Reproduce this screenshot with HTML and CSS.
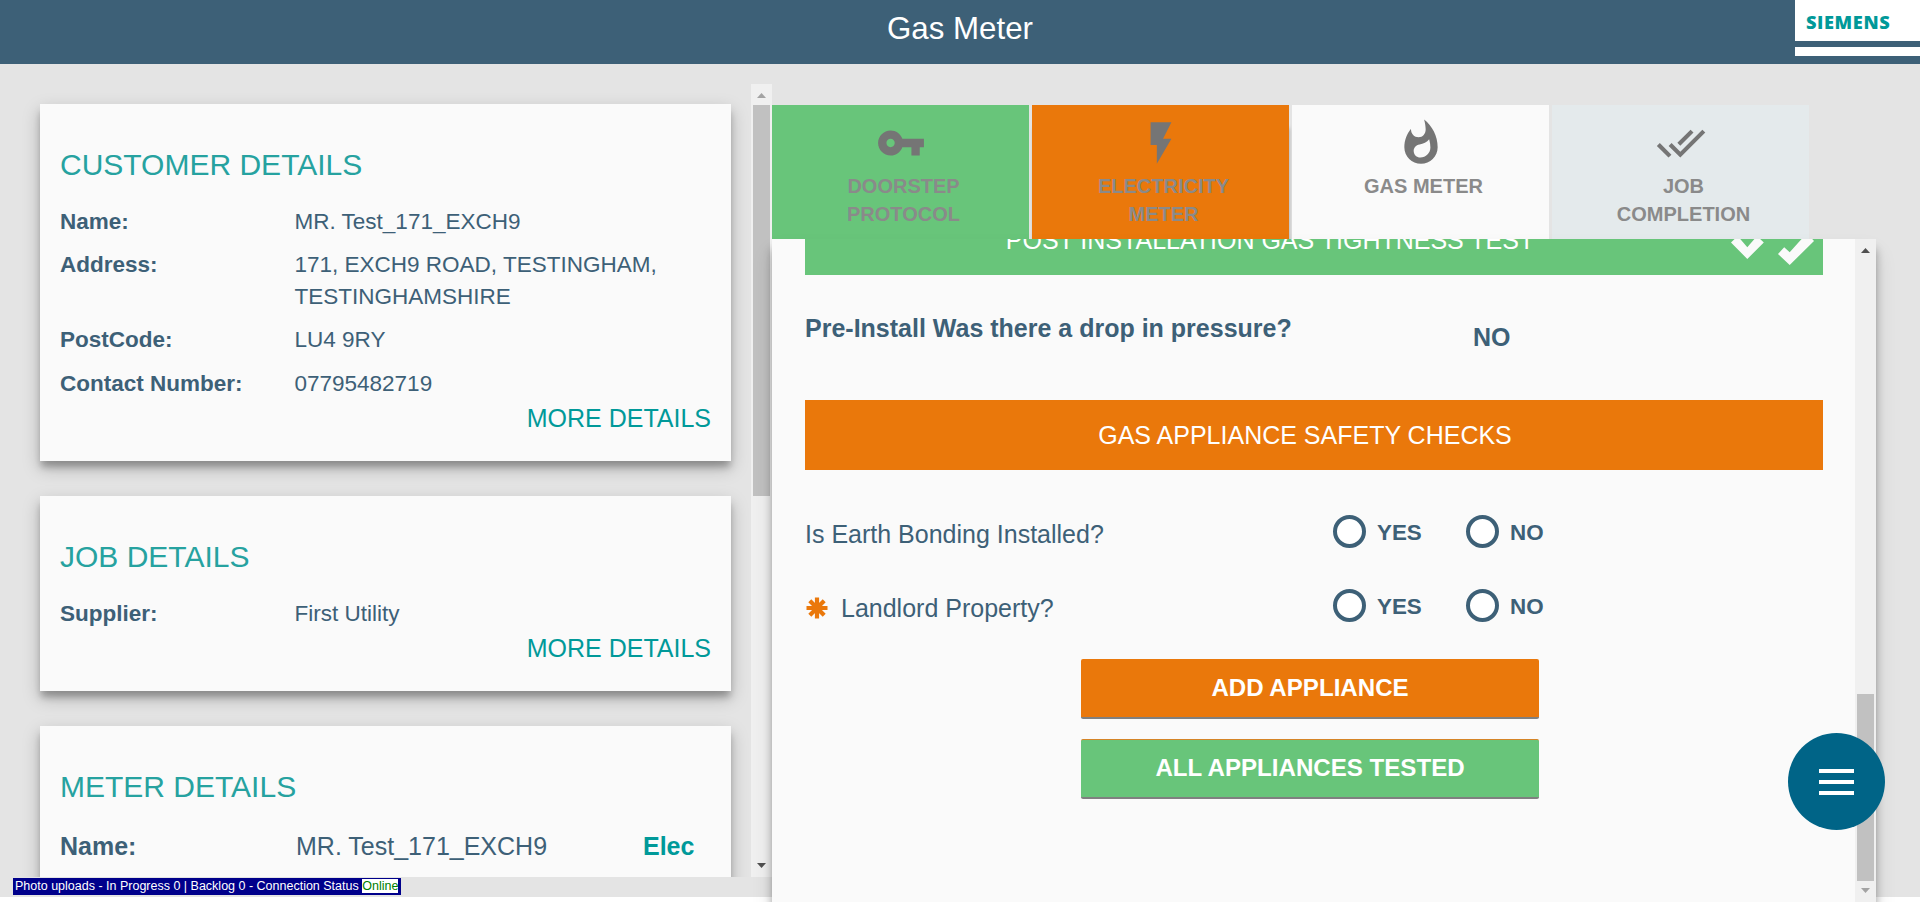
FILE: index.html
```html
<!DOCTYPE html>
<html lang="en">
<head>
<meta charset="utf-8">
<title>Gas Meter</title>
<link rel="stylesheet" href="styles.css">
</head>
<body>
<header class="topbar">
  <h1 class="topbar-title">Gas Meter</h1>
  <div class="logo"><span class="logo-name">SIEMENS</span><span class="logo-rule"></span></div>
</header>
<main class="workspace">
  <aside class="sidebar">
    <div class="sidebar-cards">
      <section class="card">
        <h2 class="card-title">CUSTOMER DETAILS</h2>
        <dl class="details">
          <dt>Name:</dt><dd>MR. Test_171_EXCH9</dd>
          <dt>Address:</dt><dd>171, EXCH9 ROAD, TESTINGHAM, TESTINGHAMSHIRE</dd>
          <dt>PostCode:</dt><dd>LU4 9RY</dd>
          <dt>Contact Number:</dt><dd>07795482719</dd>
        </dl>
        <a class="more">MORE DETAILS</a>
      </section>
      <section class="card">
        <h2 class="card-title">JOB DETAILS</h2>
        <dl class="details">
          <dt>Supplier:</dt><dd>First Utility</dd>
        </dl>
        <a class="more">MORE DETAILS</a>
      </section>
      <section class="card">
        <h2 class="card-title">METER DETAILS</h2>
        <div class="meter-row"><b>Name:</b><span>MR. Test_171_EXCH9</span><b class="fuel">Elec</b></div>
      </section>
    </div>
    <div class="scrollbar">
      <svg class="arrow arrow-off" viewBox="0 0 9 5"><path d="M0 5h9L4.500 0z"/></svg>
      <div class="thumb thumb-left"></div>
      <svg class="arrow arrow-end" viewBox="0 0 9 5"><path d="M0 0h9L4.500 5z"/></svg>
    </div>
  </aside>
  <section class="job">
    <nav class="tabs">
      <div class="tab tab-done">
        <svg class="tab-icon" viewBox="0 0 24 24"><path d="M12.650 10C11.830 7.670 9.610 6 7 6c-3.310 0-6 2.690-6 6s2.690 6 6 6c2.610 0 4.830-1.670 5.650-4H17v4h4v-4h2v-4H12.650zM7 14c-1.100 0-2-.9-2-2s.9-2 2-2 2 .9 2 2-.9 2-2 2z"/></svg>
        <span>DOORSTEP<br>PROTOCOL</span>
      </div>
      <div class="tab tab-active">
        <svg class="tab-icon" viewBox="0 0 24 24"><path d="M7 2v11h3v9l7-12h-4l4-8z"/></svg>
        <span>ELECTRICITY<br>METER</span>
      </div>
      <div class="tab tab-open">
        <svg class="tab-icon" viewBox="0 0 24 24"><path d="M13.500.670s.740 2.650.740 4.800c0 2.060-1.350 3.730-3.410 3.730-2.070 0-3.630-1.670-3.630-3.730l.030-.360C5.210 7.510 4 10.620 4 14c0 4.420 3.580 8 8 8s8-3.580 8-8C20 8.610 17.410 3.800 13.500.670zM11.710 19c-1.780 0-3.220-1.400-3.220-3.140 0-1.620 1.050-2.760 2.810-3.120 1.770-.360 3.600-1.210 4.620-2.580.390 1.290.590 2.650.590 4.040 0 2.650-2.150 4.800-4.800 4.800z"/></svg>
        <span>GAS METER</span>
      </div>
      <div class="tab tab-idle">
        <svg class="tab-icon" viewBox="0 0 24 24"><path d="M18 7l-1.410-1.410-6.340 6.340 1.410 1.410L18 7zm4.240-1.410L11.660 16.170 7.480 12l-1.410 1.410L11.660 19l12-12-1.420-1.410zM.410 13.410L6 19l1.410-1.410L1.830 12 .410 13.410z"/></svg>
        <span>JOB<br>COMPLETION</span>
      </div>
    </nav>
    <div class="panel">
      <div class="form">
        <div class="banner banner-done">
          <span>POST INSTALLATION GAS TIGHTNESS TEST</span>
          <svg class="banner-icons" viewBox="0 0 84 34"><path d="M0 10.500L16.300 27 32.800 10.500 26 4l-9.700 11.300L6.700 4zM47 22l6.200-6.800 5.500 5L76 1l7 8L58.700 33z"/></svg>
        </div>
        <div class="answer"><b>Pre-Install Was there a drop in pressure?</b><b class="answer-value">NO</b></div>
        <div class="banner banner-open"><span>GAS APPLIANCE SAFETY CHECKS</span></div>
        <div class="question">
          <span class="question-text">Is Earth Bonding Installed?</span>
          <label class="choice"><i class="radio"></i>YES</label>
          <label class="choice"><i class="radio"></i>NO</label>
        </div>
        <div class="question">
          <span class="question-text"><svg class="required" viewBox="-11 -11 22 22"><path d="M0-10.500v21M-10.500 0h21M-7.200-7.200L7.200 7.200M7.200-7.200L-7.200 7.200"/></svg>Landlord Property?</span>
          <label class="choice"><i class="radio"></i>YES</label>
          <label class="choice"><i class="radio"></i>NO</label>
        </div>
        <div class="actions">
          <button class="btn btn-add">ADD APPLIANCE</button>
          <button class="btn btn-tested">ALL APPLIANCES TESTED</button>
        </div>
      </div>
      <div class="scrollbar">
        <svg class="arrow" viewBox="0 0 9 5"><path d="M0 5h9L4.500 0z"/></svg>
        <div class="thumb thumb-right"></div>
        <svg class="arrow arrow-off arrow-last" viewBox="0 0 9 5"><path d="M0 0h9L4.500 5z"/></svg>
      </div>
    </div>
  </section>
</main>
<div class="status">Photo uploads - In Progress 0 | Backlog 0 - Connection Status <span class="status-online">Online</span></div>
<button class="fab"><i></i><i></i><i></i></button>
</body>
</html>
```
FILE: styles.css
```css
* { box-sizing: border-box; }
body {
  margin: 0;
  height: 902px;
  overflow: hidden;
  background: #fff;
  color: #3d6077;
  font-family: "Liberation Sans", Arial, sans-serif;
}
h1, h2, dl, dd { margin: 0; font-weight: normal; }

.topbar {
  display: grid;
  grid-template-columns: 125px 1fr 125px;
  height: 64px;
  background: #3d6077;
}
.topbar-title {
  grid-column: 2;
  padding-top: 9px;
  color: #fff;
  font-size: 31.25px;
  line-height: 40px;
  text-align: center;
}
.logo {
  display: flex;
  flex-direction: column;
  height: 56px;
  background: #fff;
}
.logo-name {
  height: 41px;
  padding-left: 11px;
  color: #099;
  font: 800 18.2px/44px "Open Sans", sans-serif;
  letter-spacing: .6px;
}
.logo-rule { height: 6px; background: #3d6077; }

.workspace {
  display: flex;
  height: 833px;
  background: #e4e4e4;
}
.sidebar {
  display: flex;
  width: 772px;
  height: 793px;
  margin-top: 20px;
}
.sidebar-cards {
  display: flex;
  flex-direction: column;
  gap: 35px;
  width: 751px;
  padding: 20px 20px 0 40px;
  overflow: hidden;
}
.card {
  flex: none;
  min-height: 195px;
  padding: 41px 20px 26.5px;
  background: #fafafa;
  box-shadow: 0 7px 7px -1px rgba(0, 0, 0, .26), 0 7px 17px rgba(0, 0, 0, .22);
}
.card-title {
  color: #26a2a0;
  font-size: 30px;
  line-height: 40px;
}
.details {
  display: grid;
  grid-template-columns: 234.5px 1fr;
  row-gap: 11.2px;
  margin-top: 21px;
  font-size: 22.5px;
  line-height: 32px;
}
.details dt { font-weight: bold; }
.more {
  display: block;
  margin-top: 2.5px;
  color: #099;
  font-size: 25px;
  line-height: 32px;
  text-align: right;
}
.meter-row {
  display: grid;
  grid-template-columns: 236px 347px 1fr;
  margin-top: 23px;
  font-size: 25px;
  line-height: 32px;
}
.fuel { color: #099; }

.scrollbar {
  display: flex;
  flex-direction: column;
  align-items: center;
  width: 21px;
  background: #f0f0f0;
}
.arrow {
  flex: none;
  width: 9px;
  height: 5px;
  margin: 9px 0 7px;
  fill: #505050;
}
.arrow-off { fill: #a3a3a3; }
.arrow-end { margin-top: auto; margin-bottom: 9px; }
.arrow-last { margin-bottom: 9px; margin-top: 7px; }
.thumb { width: 17px; background: #c1c1c1; }
.thumb-left { height: 391px; }
.thumb-right { height: 187px; margin-top: auto; }

.job {
  width: 1104px;
  height: 838px;
  padding-top: 41px;
}
.tabs { display: flex; gap: 3px; height: 134px; }
.tab {
  display: flex;
  flex-direction: column;
  align-items: center;
  width: 257px;
  padding-top: 13px;
  color: #8a8a8a;
  font-size: 20px;
  font-weight: bold;
  line-height: 28px;
  text-align: center;
}
.tab span { margin-top: 4px; padding-left: 6px; }
.tab-icon { flex: none; width: 50px; height: 50px; fill: #757575; }
.tab-done { background: #68c57a; }
.tab-active { background: #ea780b; box-shadow: 1px 22px 4px -1px rgba(0, 0, 0, .3); }
.tab-open { background: #fafafa; }
.tab-idle { background: #e4eaec; }

.panel {
  position: relative;
  display: flex;
  height: 663px;
  background: #fafafa;
  box-shadow: 0 10px 8px rgba(0, 0, 0, .3), 0 14px 20px rgba(0, 0, 0, .12);
}
.form {
  width: 1083px;
  padding: 0 32px 0 33px;
  overflow: hidden;
  font-size: 25px;
  line-height: 36px;
}
.banner {
  display: flex;
  align-items: center;
  justify-content: center;
  height: 70px;
  color: #fff;
}
.banner-done { margin-top: -34px; padding-left: 4px; background: #68c57a; }
.banner-done span { flex: 1; text-align: center; }
.banner-icons { width: 84px; height: 34px; margin: 18px 8px 0 0; fill: #fafafa; }
.banner-open { padding-right: 18px; background: #ea780b; }
.answer {
  display: grid;
  grid-template-columns: 668px 1fr;
  height: 125px;
  padding-top: 34.5px;
}
.answer-value { padding-top: 9px; }
.question {
  display: grid;
  grid-template-columns: 528px 133px 133px;
  height: 74.5px;
}
.banner-open + .question { margin-top: 45px; }
.question-text { display: flex; align-items: flex-start; padding-top: 1px; }
.required {
  width: 22px;
  height: 22px;
  margin: 7px 13px 0 1px;
  fill: none;
  stroke: #ea780b;
  stroke-width: 4.2;
}
.choice {
  display: flex;
  align-items: flex-start;
  gap: 11px;
  font-size: 22.4px;
  font-weight: bold;
}
.radio {
  width: 33px;
  height: 33px;
  border: 4px solid #3d6077;
  border-radius: 50%;
  background: #fff;
}
.actions {
  display: flex;
  flex-direction: column;
  gap: 20px;
  width: 458px;
  margin-left: 276px;
}
.question + .question { height: 69.5px; margin-top: -.5px; }
.btn {
  height: 60px;
  padding: 0;
  border: 0;
  border-bottom: 2px solid #808080;
  border-radius: 2px;
  color: #fff;
  font: bold 24.1px "Liberation Sans", Arial, sans-serif;
}
.btn-add { background: #ea780b; }
.btn-tested { border-top: 1px solid #d58427; background: #68c57a; }

.status {
  position: absolute;
  left: 13px;
  top: 878px;
  width: 388px;
  height: 17px;
  padding-left: 2px;
  background: #00008b;
  color: #fff;
  font-size: 12.5px;
  line-height: 16px;
  white-space: nowrap;
}
.status-online { background: #fff; color: #008000; }
.fab {
  position: absolute;
  left: 1788px;
  top: 733px;
  display: flex;
  flex-direction: column;
  align-items: center;
  justify-content: center;
  gap: 7px;
  width: 97px;
  height: 97px;
  padding: 0;
  border: 0;
  border-radius: 50%;
  background: #006487;
}
.fab i { width: 35px; height: 4px; background: #fff; }
```
